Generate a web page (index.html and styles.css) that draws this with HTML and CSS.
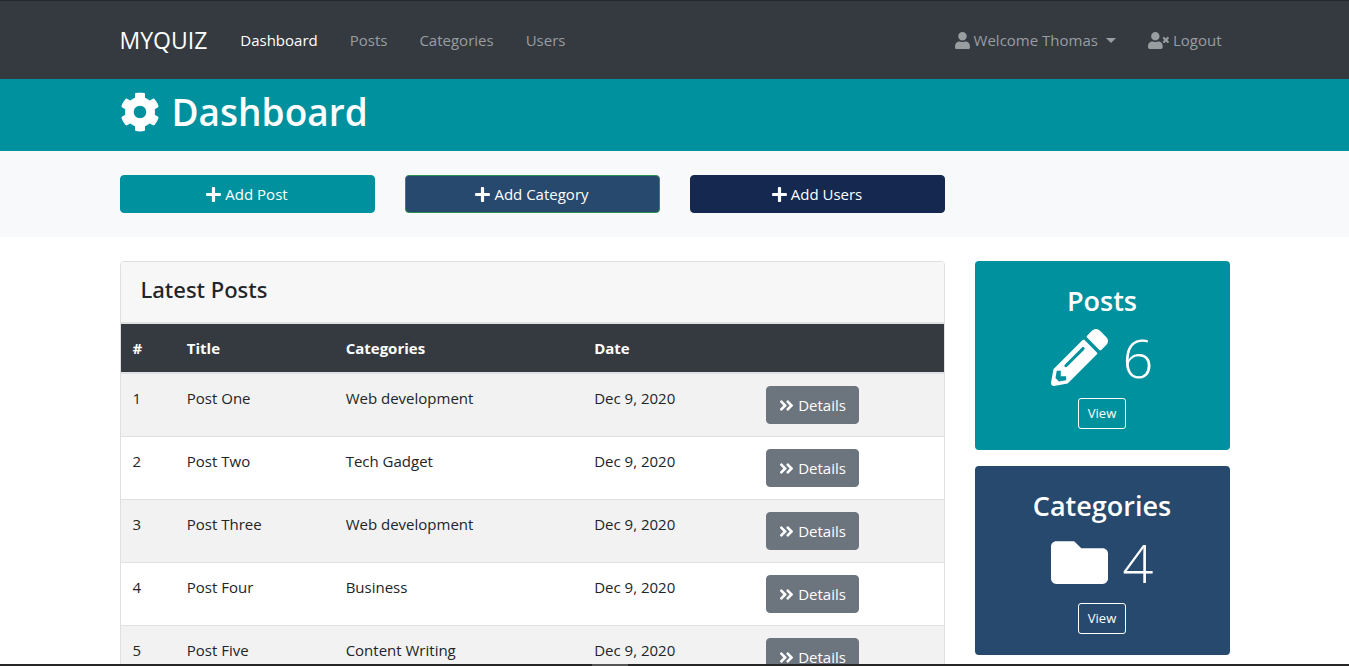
FILE: index.html
```
<!DOCTYPE html>
<html lang="en">
<head>
<meta charset="utf-8">
<meta name="viewport" content="width=device-width, initial-scale=1">
<title>MYQUIZ Dashboard</title>
<link rel="stylesheet" href="styles.css">
</head>
<body>
<svg class="sprite" aria-hidden="true">
  <symbol id="user" viewBox="0 0 448 512"><path d="M224 256c70.7 0 128-57.3 128-128S294.7 0 224 0 96 57.3 96 128s57.3 128 128 128zm89.6 32h-16.7c-22.2 10.2-46.9 16-72.9 16s-50.6-5.8-72.9-16h-16.7C60.2 288 0 348.2 0 422.4V464c0 26.5 21.5 48 48 48h352c26.5 0 48-21.5 48-48v-41.6c0-74.2-60.2-134.4-134.4-134.4z"/></symbol>
  <symbol id="user-times" viewBox="0 0 640 512"><path d="M589.6 240l45.6-45.6c6.3-6.3 6.3-16.5 0-22.8l-22.8-22.8c-6.3-6.3-16.5-6.3-22.8 0L544 194.4l-45.6-45.6c-6.3-6.3-16.5-6.3-22.8 0l-22.8 22.8c-6.3 6.3-6.3 16.5 0 22.8l45.6 45.6-45.6 45.6c-6.3 6.3-6.3 16.5 0 22.8l22.8 22.8c6.3 6.3 16.5 6.3 22.8 0l45.6-45.6 45.6 45.6c6.3 6.3 16.5 6.3 22.8 0l22.8-22.8c6.3-6.3 6.3-16.5 0-22.8L589.6 240zM224 256c70.7 0 128-57.3 128-128S294.7 0 224 0 96 57.3 96 128s57.3 128 128 128zm89.6 32h-16.7c-22.2 10.2-46.9 16-72.9 16s-50.6-5.8-72.9-16h-16.7C60.2 288 0 348.2 0 422.4V464c0 26.5 21.5 48 48 48h352c26.5 0 48-21.5 48-48v-41.6c0-74.2-60.2-134.4-134.4-134.4z"/></symbol>
  <symbol id="plus" viewBox="0 0 448 512"><path d="M416 208H272V64c0-17.67-14.33-32-32-32h-32c-17.67 0-32 14.33-32 32v144H32c-17.67 0-32 14.33-32 32v32c0 17.67 14.33 32 32 32h144v144c0 17.67 14.33 32 32 32h32c17.67 0 32-14.33 32-32V304h144c17.67 0 32-14.33 32-32v-32c0-17.67-14.33-32-32-32z"/></symbol>
  <symbol id="cog" viewBox="0 0 512 512"><path d="M487.4 315.7l-42.6-24.6c4.3-23.2 4.3-47 0-70.2l42.6-24.6c4.9-2.8 7.1-8.6 5.5-14-11.1-35.6-30-67.8-54.7-94.6-3.8-4.1-10-5.1-14.8-2.3L380.8 110c-17.9-15.4-38.5-27.3-60.8-35.1V25.8c0-5.6-3.9-10.5-9.4-11.7-36.7-8.2-74.3-7.8-109.2 0-5.5 1.2-9.4 6.1-9.4 11.7V75c-22.2 7.9-42.8 19.8-60.8 35.1L88.7 85.5c-4.9-2.8-11-1.9-14.8 2.3-24.7 26.7-43.6 58.9-54.7 94.6-1.7 5.4.6 11.2 5.5 14L67.3 221c-4.3 23.2-4.3 47 0 70.2l-42.6 24.6c-4.9 2.8-7.1 8.6-5.5 14 11.1 35.6 30 67.8 54.7 94.6 3.8 4.1 10 5.1 14.8 2.3l42.6-24.6c17.9 15.4 38.5 27.3 60.8 35.1v49.2c0 5.6 3.9 10.5 9.4 11.7 36.7 8.2 74.3 7.8 109.2 0 5.5-1.2 9.4-6.1 9.4-11.7v-49.2c22.2-7.9 42.8-19.8 60.8-35.1l42.6 24.6c4.9 2.8 11 1.9 14.8-2.3 24.7-26.7 43.6-58.9 54.7-94.6 1.5-5.5-.7-11.3-5.6-14.1zM256 336c-44.1 0-80-35.9-80-80s35.9-80 80-80 80 35.9 80 80-35.9 80-80 80z"/></symbol>
  <symbol id="angles" viewBox="0 0 448 512"><path d="M224.3 273l-136 136c-9.4 9.4-24.6 9.4-33.9 0l-22.6-22.6c-9.4-9.4-9.4-24.6 0-33.9l96.4-96.4-96.4-96.4c-9.4-9.4-9.4-24.6 0-33.9L54.3 103c9.4-9.4 24.6-9.4 33.9 0l136 136c9.5 9.4 9.5 24.6.1 34zm192-34l-136-136c-9.4-9.4-24.6-9.4-33.9 0l-22.6 22.6c-9.4 9.4-9.4 24.6 0 33.9l96.4 96.4-96.4 96.4c-9.4 9.4-9.4 24.6 0 33.9l22.6 22.6c9.4 9.4 24.6 9.4 33.9 0l136-136c9.4-9.2 9.4-24.4 0-33.8z"/></symbol>
  <symbol id="pencil" viewBox="0 0 512 512"><path d="M497.9 142.1l-46.1 46.1c-4.7 4.7-12.3 4.7-17 0l-111-111c-4.7-4.7-4.7-12.3 0-17l46.1-46.1c18.7-18.7 49.1-18.7 67.9 0l60.1 60.1c18.8 18.7 18.8 49.1 0 67.9zM284.2 99.8L21.6 362.4.4 483.9c-2.9 16.4 11.4 30.6 27.8 27.8l121.5-21.3 262.6-262.6c4.7-4.7 4.7-12.3 0-17l-111-111c-4.8-4.7-12.4-4.7-17.1 0zM124.1 339.9c-5.5-5.5-5.5-14.3 0-19.8l154-154c5.5-5.5 14.3-5.5 19.8 0s5.5 14.3 0 19.8l-154 154c-5.5 5.5-14.3 5.5-19.8 0zM88 424h48v36.3l-64.5 11.3-31.1-31.1L51.7 376H88v48z"/></symbol>
  <symbol id="folder" viewBox="0 0 512 512"><path d="M464 128H272l-64-64H48C21.49 64 0 85.49 0 112v288c0 26.51 21.49 48 48 48h416c26.51 0 48-21.49 48-48V176c0-26.51-21.49-48-48-48z"/></symbol>
</svg>

<div class="page">
  <nav class="navbar">
    <div class="container navbar-inner">
      <a class="brand" href="#">MYQUIZ</a>
      <ul class="nav">
        <li><a class="nav-link active" href="#">Dashboard</a></li>
        <li><a class="nav-link" href="#">Posts</a></li>
        <li><a class="nav-link" href="#">Categories</a></li>
        <li><a class="nav-link" href="#">Users</a></li>
      </ul>
      <ul class="nav nav-end">
        <li><a class="nav-link" href="#"><svg class="icon"><use href="#user"/></svg>Welcome Thomas<span class="caret"></span></a></li>
        <li><a class="nav-link" href="#"><svg class="icon icon-wide"><use href="#user-times"/></svg>Logout</a></li>
      </ul>
    </div>
  </nav>

  <header class="heading">
    <div class="container">
      <h1 class="heading-title"><svg class="icon icon-cog"><use href="#cog"/></svg>Dashboard</h1>
    </div>
  </header>

  <section class="actions">
    <div class="container grid">
      <button type="button" class="btn btn-teal"><svg class="icon"><use href="#plus"/></svg>Add Post</button>
      <button type="button" class="btn btn-blue"><svg class="icon"><use href="#plus"/></svg>Add Category</button>
      <button type="button" class="btn btn-navy"><svg class="icon"><use href="#plus"/></svg>Add Users</button>
    </div>
  </section>

  <main class="container grid content">
    <section class="card">
      <div class="card-header"><h2 class="card-title">Latest Posts</h2></div>
      <table class="table">
        <colgroup><col class="col-id"><col class="col-title"><col class="col-category"><col class="col-date"><col></colgroup>
        <thead>
          <tr><th>#</th><th>Title</th><th>Categories</th><th>Date</th><th></th></tr>
        </thead>
        <tbody>
          <tr><td>1</td><td>Post One</td><td>Web development</td><td>Dec 9, 2020</td><td><a class="btn btn-gray" href="#"><svg class="icon"><use href="#angles"/></svg>Details</a></td></tr>
          <tr><td>2</td><td>Post Two</td><td>Tech Gadget</td><td>Dec 9, 2020</td><td><a class="btn btn-gray" href="#"><svg class="icon"><use href="#angles"/></svg>Details</a></td></tr>
          <tr><td>3</td><td>Post Three</td><td>Web development</td><td>Dec 9, 2020</td><td><a class="btn btn-gray" href="#"><svg class="icon"><use href="#angles"/></svg>Details</a></td></tr>
          <tr><td>4</td><td>Post Four</td><td>Business</td><td>Dec 9, 2020</td><td><a class="btn btn-gray" href="#"><svg class="icon"><use href="#angles"/></svg>Details</a></td></tr>
          <tr><td>5</td><td>Post Five</td><td>Content Writing</td><td>Dec 9, 2020</td><td><a class="btn btn-gray" href="#"><svg class="icon"><use href="#angles"/></svg>Details</a></td></tr>
        </tbody>
      </table>
    </section>

    <aside class="stats">
      <section class="stat stat-teal">
        <h3 class="stat-title">Posts</h3>
        <p class="stat-value"><svg class="icon icon-stat"><use href="#pencil"/></svg>6</p>
        <a class="btn-view" href="#">View</a>
      </section>
      <section class="stat stat-blue">
        <h3 class="stat-title">Categories</h3>
        <p class="stat-value"><svg class="icon icon-stat"><use href="#folder"/></svg>4</p>
        <a class="btn-view" href="#">View</a>
      </section>
    </aside>
  </main>
</div>
<div class="bottom-edge"><span class="bottom-handle"></span></div>
</body>
</html>
```
FILE: styles.css
```
*, *::before, *::after { box-sizing: border-box; }

body {
  margin: 0;
  color: #212529;
  background: #fff;
  font-family: "Open Sans", "Noto Sans", sans-serif;
  font-size: 15px;
  line-height: 24px;
}

h1, h2, h3, p, ul { margin: 0; padding: 0; }
a { color: inherit; text-decoration: none; }

.sprite { display: none; }

.page {
  height: 100vh;
  overflow-y: auto;
  scrollbar-width: none;
}

.container {
  width: 100%;
  max-width: 1140px;
  margin: 0 auto;
  padding: 0 15px;
}

.grid {
  display: grid;
  grid-template-columns: repeat(4, minmax(0, 1fr));
  gap: 30px;
}

.icon {
  flex: none;
  width: 15px;
  height: 17px;
  fill: currentColor;
}
.icon-wide { width: 21px; }
.icon-cog { width: 40px; height: 40px; }
.icon-stat { width: 57px; height: 57px; }

.navbar {
  padding: 19px 0;
  color: #fff;
  background: #343a40;
  border-top: 1px solid #23272b;
}
.navbar-inner { display: flex; align-items: center; gap: 33px; }
.brand { font-size: 23px; line-height: 40px; }
.nav { display: flex; gap: 32px; list-style: none; }
.nav-end { margin-left: auto; padding-right: 8px; }
.nav-link {
  display: flex;
  align-items: center;
  gap: 4px;
  color: #9a9da0;
}
.nav-link.active { color: #fff; }
.caret {
  margin-left: 4px;
  border-top: 5px solid;
  border-right: 5px solid transparent;
  border-left: 5px solid transparent;
}

.heading { padding: 9px 0 15px; color: #fff; background: #00919e; }
.heading-title {
  display: flex;
  align-items: center;
  gap: 12px;
  font-size: 37px;
  font-weight: 600;
  line-height: 48px;
}

.actions { padding: 24px 0; background: #f8f9fa; }

.btn {
  display: inline-flex;
  align-items: center;
  justify-content: center;
  gap: 4px;
  padding: 6px 12px;
  color: #fff;
  border: 1px solid;
  border-radius: 4px;
  font: inherit;
}
.btn-teal { background: #00919e; border-color: #00919e; }
.btn-blue { background: #27496d; border-color: #28904a; }
.btn-navy { background: #142850; border-color: #142850; }
.btn-gray { background: #6c757d; border-color: #6c757d; vertical-align: top; }

.content { align-items: start; padding-top: 24px; padding-bottom: 24px; }

.card {
  grid-column: span 3;
  overflow: hidden;
  border: 1px solid #dfdfdf;
  border-radius: 4px;
}
.card-header {
  padding: 13px 20px 19px;
  background: #f7f7f7;
  border-bottom: 1px solid #dfdfdf;
}
.card-title {
  font-family: "Noto Sans", "Open Sans", sans-serif;
  font-size: 22px;
  font-weight: 500;
  line-height: 28px;
}

.table {
  width: 100%;
  table-layout: fixed;
  border-spacing: 0;
}
.col-id { width: 6.6%; }
.col-title { width: 19.3%; }
.col-category { width: 30.2%; }
.col-date { width: 20.9%; }
.table th, .table td { padding: 12px; text-align: left; vertical-align: top; }
.table th {
  color: #fff;
  background: #343a40;
  background-clip: padding-box;
  border-top: 1px solid #dee2e6;
  border-bottom: 2px solid #dee2e6;
  font-weight: 700;
}
.table tbody tr:nth-child(odd) { background: #f2f2f2; }
.table tr + tr td { border-top: 1px solid #dee2e6; }

.stats { display: flex; flex-direction: column; gap: 16px; }
.stat {
  display: flex;
  flex-direction: column;
  align-items: center;
  gap: 7px;
  padding: 23px 21px 21px;
  color: #fff;
  border-radius: 4px;
}
.stat-teal { background: #00919e; }
.stat-blue { background: #27496d; }
.stat-title { font-size: 27px; font-weight: 600; line-height: 33px; }
.stat-value {
  display: flex;
  align-items: center;
  gap: 15px;
  font-size: 54px;
  font-weight: 300;
  line-height: 67px;
}
.btn-view {
  padding: 4px 9px;
  border: 1px solid #fff;
  border-radius: 3px;
  font-size: 13px;
  line-height: 21px;
}

.bottom-edge {
  position: fixed;
  right: 0;
  bottom: 0;
  left: 0;
  display: flex;
  justify-content: center;
  padding-right: 130px;
  background: #262626;
}
.bottom-handle { width: 36px; height: 2px; background: #555; }
```
